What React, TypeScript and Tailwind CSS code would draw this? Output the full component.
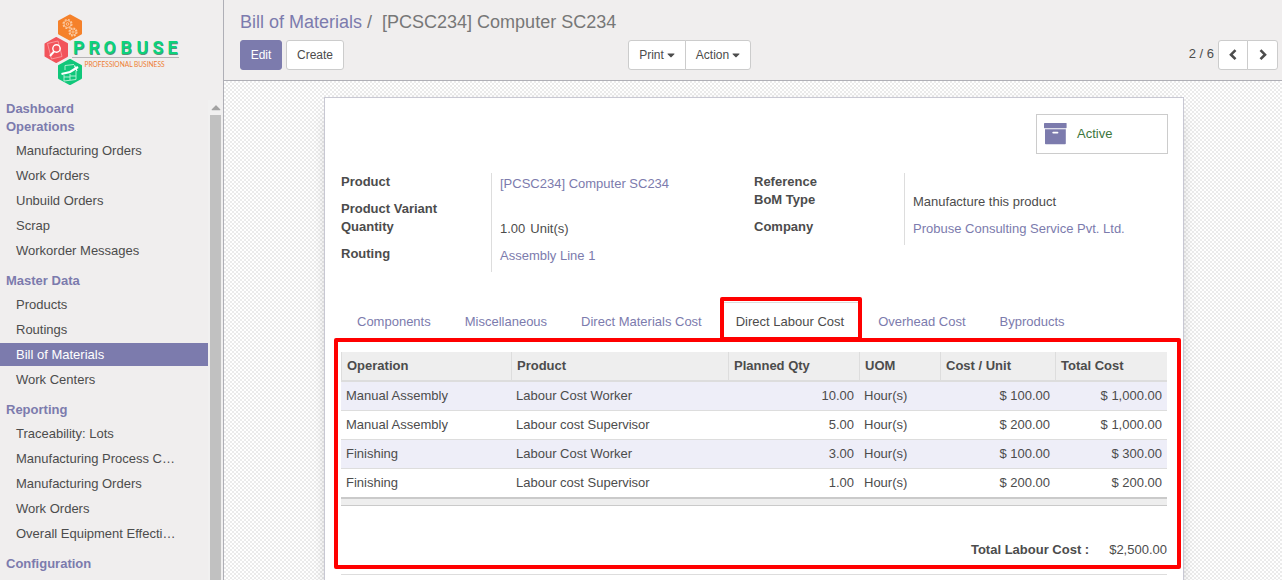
import { FaCaretDown, FaCaretUp } from "react-icons/fa";
import type { ReactNode } from "react";

type Section = { title: string; items: string[] };

const sections: Section[] = [
  { title: "Dashboard", items: [] },
  {
    title: "Operations",
    items: ["Manufacturing Orders", "Work Orders", "Unbuild Orders", "Scrap", "Workorder Messages"],
  },
  { title: "Master Data", items: ["Products", "Routings", "Bill of Materials", "Work Centers"] },
  {
    title: "Reporting",
    items: [
      "Traceability: Lots",
      "Manufacturing Process C…",
      "Manufacturing Orders",
      "Work Orders",
      "Overall Equipment Effecti…",
    ],
  },
  { title: "Configuration", items: [] },
];

const tabs = [
  "Components",
  "Miscellaneous",
  "Direct Materials Cost",
  "Direct Labour Cost",
  "Overhead Cost",
  "Byproducts",
];

const columns = [
  { label: "Operation", width: "w-[170px]" },
  { label: "Product", width: "" },
  { label: "Planned Qty", width: "w-[131px]" },
  { label: "UOM", width: "w-[81px]" },
  { label: "Cost / Unit", width: "w-[115px]" },
  { label: "Total Cost", width: "w-[112px]" },
];

const rows = [
  ["Manual Assembly", "Labour Cost Worker", "10.00", "Hour(s)", "$ 100.00", "$ 1,000.00"],
  ["Manual Assembly", "Labour cost Supervisor", "5.00", "Hour(s)", "$ 200.00", "$ 1,000.00"],
  ["Finishing", "Labour Cost Worker", "3.00", "Hour(s)", "$ 100.00", "$ 300.00"],
  ["Finishing", "Labour cost Supervisor", "1.00", "Hour(s)", "$ 200.00", "$ 200.00"],
];

const numeric = [false, false, true, false, true, true];

function Logo() {
  return (
    <svg width="140" height="76" viewBox="42 12 140 76" role="img" aria-label="Probuse Professional Business">
      <g strokeLinejoin="round" strokeWidth="2">
        <path d="M70 15.500 81 21.500V33.500L70 39.500 59 33.500V21.500Z" fill="#f5812a" stroke="#f5812a" />
        <path d="M56 38 67 44V56L56 62 45.500 56V44Z" fill="#f2545b" stroke="#f2545b" />
        <path d="M70 60 81 66V78L70 84 59 78V66Z" fill="#10c77a" stroke="#10c77a" />
      </g>
      <g fill="none" stroke="#fbc9a0" strokeWidth="0.900">
        <circle cx="67.500" cy="24" r="4.400" strokeWidth="1.300" strokeDasharray="2 1.450" />
        <circle cx="67.500" cy="24" r="3.500" />
        <circle cx="67.500" cy="24" r="1.300" />
        <circle cx="73" cy="32" r="3.900" strokeWidth="1.300" strokeDasharray="1.900 1.160" />
        <circle cx="73" cy="32" r="3" />
        <circle cx="73" cy="32" r="1.100" />
      </g>
      <g fill="none" stroke="#fba5a8" strokeWidth="0.800">
        <path d="M47.500 43.500 58 41 62 56.500 51.500 59Z" />
        <circle cx="56.500" cy="48.500" r="3.700" stroke="#fff" strokeWidth="1.400" />
        <path d="M54 51.500 50 56" stroke="#fff" strokeWidth="1.900" />
      </g>
      <g fill="none" stroke="#bff3da" strokeWidth="0.900">
        <path d="M64 75V81L76 79.500V71M65 70V65.500L74 64.500M70 74V80M70 76H76M64 77H70" />
        <path d="M61.500 74 70 72 78 67" stroke="#fff" strokeWidth="2.300" />
        <path d="M74.500 65.500 77 71" stroke="#fff" strokeWidth="1.200" />
      </g>
      <g fontFamily="Roboto, sans-serif" fontSize="18" fontWeight="700">
        <text x="73.500 89 104 121 137 153 168" y="55" fill="#5f8f78">
          PROBUSE
        </text>
        <text x="73 88.500 103.500 120.500 136.500 152.500 167.500" y="54" fill="#0bd37c" aria-hidden="true">
          PROBUSE
        </text>
      </g>
      <path d="M72 57.500H179" stroke="#b5b3b5" strokeWidth="1" />
      <text x="84.500" y="67" fill="#ee7d31" fontFamily="Lato, sans-serif" fontSize="6.600">
        PROFESSIONAL BUSINESS
      </text>
    </svg>
  );
}

function Chevron({ d }: { d: string }) {
  return (
    <svg width="12" height="12" viewBox="0 0 12 12" fill="none" stroke="currentColor" strokeWidth="2.600">
      <path d={d} />
    </svg>
  );
}

function ArchiveIcon() {
  return (
    <svg width="23" height="22" viewBox="0 0 23 22" fill="#7c7bad">
      <rect width="22.600" height="5.200" rx="0.600" />
      <path
        fillRule="evenodd"
        d="M1 6.200H21.800V20.500Q21.800 21.200 21 21.200H1.800Q1 21.200 1 20.500ZM9.200 8.700A.9.900 0 0 0 9.200 10.500H13.500A.9.900 0 0 0 13.500 8.700Z"
      />
    </svg>
  );
}

function Sidebar() {
  return (
    <aside className="flex w-56 shrink-0 flex-col border-r border-[#afafb6] bg-[#f0eeee]">
      <a href="#home" className="flex h-[100px] shrink-0 justify-center pt-3">
        <Logo />
      </a>
      <div className="flex min-h-0 flex-1">
        <nav className="min-w-0 flex-1 overflow-hidden">
          {sections.map((s) => (
            <section key={s.title}>
              <h2 className="pl-1.5 leading-[18px] font-bold text-[#7c7bad]">{s.title}</h2>
              {s.items.length > 0 && (
                <ul className="flex flex-col gap-0.5 pt-[3px] pb-2.5">
                  {s.items.map((i) => (
                    <li key={i}>
                      <a
                        href="#menu"
                        className={
                          i === "Bill of Materials"
                            ? "block bg-[#7c7bad] pl-4 leading-[23px] text-white"
                            : "block pl-4 leading-[23px]"
                        }
                      >
                        {i}
                      </a>
                    </li>
                  ))}
                </ul>
              )}
            </section>
          ))}
        </nav>
        <div className="flex w-[15px] flex-col items-center bg-[#f1f0f0]" aria-hidden="true">
          <FaCaretUp className="h-[15px] w-2.5 shrink-0 text-[#a3a3a3]" />
          <div className="w-[11px] flex-1 bg-[#c1c1c1]" />
        </div>
      </div>
    </aside>
  );
}

function ControlPanel() {
  const plain = "flex items-center border border-[#ccc] bg-white";
  return (
    <header className="h-[81px] shrink-0 border-b border-[#afafb6] bg-[#f0eeee] pr-1 pl-4">
      <ol className="flex h-10 items-center pt-1 text-lg leading-6">
        <li>
          <a href="#boms" className="text-[#7c7bad]">
            Bill of Materials
          </a>
          <span className="px-[5px] text-[#777]">/</span>
        </li>
        <li className="pl-[5px] text-[#777]">[PCSC234] Computer SC234</li>
      </ol>
      <div className="grid h-[30px] grid-cols-2 text-xs">
        <div className="flex justify-between pr-2">
          <div className="flex gap-1">
            <button className="w-[42px] rounded-[3px] border border-[#7c7bad] bg-[#7c7bad] text-white">Edit</button>
            <button className={`${plain} w-[58px] justify-center rounded-[3px]`}>Create</button>
          </div>
          <div className="flex">
            <button className={`${plain} w-[58px] justify-center gap-[3px] rounded-l-[3px]`}>
              Print <FaCaretDown className="h-3 w-2" />
            </button>
            <button className={`${plain} -ml-px w-[66px] justify-center gap-[3px] rounded-r-[3px]`}>
              Action <FaCaretDown className="h-3 w-2" />
            </button>
          </div>
        </div>
        <div className="flex justify-end">
          <span className="pr-1 text-[13px] leading-7">2 / 6</span>
          <button aria-label="Previous" className={`${plain} w-[30px] justify-center rounded-l-[3px]`}>
            <Chevron d="M8.500 1.200 4 5.700 8.500 10.200" />
          </button>
          <button aria-label="Next" className={`${plain} -ml-px w-[31px] justify-center rounded-r-[3px]`}>
            <Chevron d="M3.500 1.200 8 5.700 3.500 10.200" />
          </button>
        </div>
      </div>
    </header>
  );
}

function Field({ label, value, link }: { label: string; value?: ReactNode; link?: boolean }) {
  return (
    <div className="grid grid-cols-[150px_1fr]">
      <dt className="leading-[18px] font-bold">{label}</dt>
      <dd className="border-l border-[#ddd] pl-2">
        {value && (
          <div className="flex gap-[5px] pt-0.5 pb-[7px] leading-[18px]">
            {link ? (
              <a href="#record" className="text-[#7c7bad]">
                {value}
              </a>
            ) : (
              value
            )}
          </div>
        )}
      </dd>
    </div>
  );
}

function CostTable() {
  return (
    <table className="w-full table-fixed border-separate border-spacing-0">
      <thead>
        <tr className="bg-[#eee]">
          {columns.map((c) => (
            <th
              key={c.label}
              scope="col"
              className={`${c.width} h-[30px] border-b-2 border-l border-[#ddd] px-[5px] text-left font-bold`}
            >
              {c.label}
            </th>
          ))}
        </tr>
      </thead>
      <tbody>
        {rows.map((r, n) => (
          <tr key={n} className="group odd:bg-[#eeeef8]">
            {r.map((v, i) => (
              <td
                key={i}
                className={`h-[29px] border-b border-[#ddd] px-[5px] group-last:h-7 group-last:border-b-0 ${
                  numeric[i] ? "text-right" : "text-left"
                }`}
              >
                {v}
              </td>
            ))}
          </tr>
        ))}
      </tbody>
      <tfoot>
        <tr className="bg-[#eee]">
          <td colSpan={6} className="h-[9px] border-t-2 border-b border-[#cacaca] p-0" />
        </tr>
      </tfoot>
    </table>
  );
}

function Notebook() {
  return (
    <section className="mt-[30px]">
      <div role="tablist" className="flex gap-0.5 border-b border-[#ddd]">
        {tabs.map((t) =>
          t === "Direct Labour Cost" ? (
            <div key={t} className="relative -mb-px">
              <button
                role="tab"
                aria-selected="true"
                className="border border-b-0 border-[#ddd] bg-white px-[15px] py-2.5 leading-[18px]"
              >
                {t}
              </button>
              <div className="pointer-events-none absolute -top-[5px] -right-0.5 bottom-px left-0 rounded-xs border-4 border-[#f00]" />
            </div>
          ) : (
            <button
              key={t}
              role="tab"
              aria-selected="false"
              className="border border-b-0 border-transparent px-[15px] py-2.5 leading-[18px] text-[#7c7bad]"
            >
              {t}
            </button>
          ),
        )}
      </div>
      <div role="tabpanel" className="relative border-b border-[#ddd] pt-2.5 pb-[15px]">
        <CostTable />
        <dl className="flex justify-end gap-5 pt-[35px] leading-[18px]">
          <dt className="font-bold">Total Labour Cost :</dt>
          <dd>$2,500.00</dd>
        </dl>
        <div className="pointer-events-none absolute -top-1 -right-3.5 bottom-[5px] -left-[7px] rounded-xs border-4 border-[#f00]" />
      </div>
    </section>
  );
}

export default function App() {
  return (
    <div className="flex h-screen overflow-hidden font-['Liberation_Sans',Arial,sans-serif] text-[13px] leading-[18px] text-[#4c4c4c]">
      <Sidebar />
      <div className="flex min-w-0 flex-1 flex-col">
        <ControlPanel />
        <main className="min-h-0 flex-1 overflow-hidden bg-white bg-[repeating-conic-gradient(#ebebeb_0_25%,#fff_0_50%)] bg-size-[4px_4px] pt-4 pl-0.5">
          <div className="mx-auto min-h-[600px] max-w-[860px] border border-[#c8c8d3] bg-white p-4 shadow-[0_5px_20px_-15px_black]">
            <div className="-mr-px flex justify-end">
              <button className="flex h-10 w-[132px] items-center border border-[#ccc] pl-[7px] text-left text-[#3c763d]">
                <ArchiveIcon />
                <span className="pl-2.5">Active</span>
              </button>
            </div>
            <div className="mt-[19px] grid grid-cols-2 items-start">
              <dl>
                <Field label="Product" value="[PCSC234] Computer SC234" link />
                <Field label="Product Variant" />
                <Field
                  label="Quantity"
                  value={
                    <>
                      <span>1.00</span>
                      <span>Unit(s)</span>
                    </>
                  }
                />
                <Field label="Routing" value="Assembly Line 1" link />
              </dl>
              <dl>
                <Field label="Reference" />
                <Field label="BoM Type" value="Manufacture this product" />
                <Field label="Company" value="Probuse Consulting Service Pvt. Ltd." link />
              </dl>
            </div>
            <Notebook />
          </div>
        </main>
      </div>
    </div>
  );
}
